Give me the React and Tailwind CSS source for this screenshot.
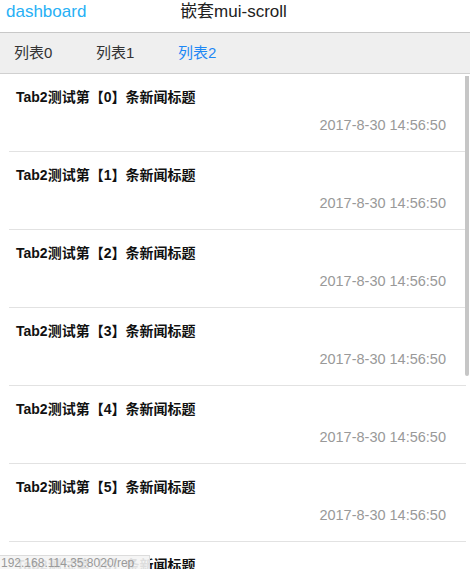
const items = [0, 1, 2, 3, 4, 5, 6, 7];

export default function App() {
  return (
    <div
      className="relative w-[470px] h-[569px] overflow-hidden bg-white"
      style={{ fontFamily: '"Liberation Sans", "Noto Sans CJK SC", sans-serif' }}
    >
      {/* header */}
      <div className="relative h-[33px] border-b border-[#c8c8c8] bg-white">
        <span className="absolute left-[6px] top-0 text-[17px] leading-[24px] text-[#27b0f5]">dashboard</span>
        <div className="text-center text-[17px] leading-[24px] text-[#222] pr-[3px]">嵌套mui-scroll</div>
      </div>

      {/* tabs */}
      <div className="flex h-[41px] items-center pl-[14px] bg-[#efefef] border-b border-[#d0d0d0] text-[15px]">
        <span className="w-[82px] text-[#333]">列表0</span>
        <span className="w-[82px] text-[#333]">列表1</span>
        <span className="w-[82px] text-[#1e88f5]">列表2</span>
      </div>

      {/* list */}
      <div className="flex flex-col">
        {items.map((i) => (
          <div key={i} className="ml-[9px] mr-[4px] border-b border-[#e2e2e2] pt-[13px] pb-[16px]">
            <div className="pl-[7px] text-[14px] leading-[20px] font-bold text-[#111]">
              Tab2测试第【{i}】条新闻标题
            </div>
            <div className="mt-[8px] pr-[20px] text-right text-[14.5px] leading-[20px] text-[#999]">
              2017-8-30 14:56:50
            </div>
          </div>
        ))}
      </div>

      {/* scrollbar */}
      <div className="absolute left-[465px] top-[76px] w-[4px] h-[300px] rounded-b-sm bg-[#c6c6c6]" />

      {/* browser status bubble */}
      <div className="absolute left-0 bottom-0 h-[14px] w-[150px] bg-[#f4f4f4]/90 border-t border-r border-[#dcdcdc] pl-[1px] text-[12px] leading-[14px] text-[#999] overflow-hidden whitespace-nowrap">
        192.168.114.35:8020/rep
      </div>
    </div>
  );
}
